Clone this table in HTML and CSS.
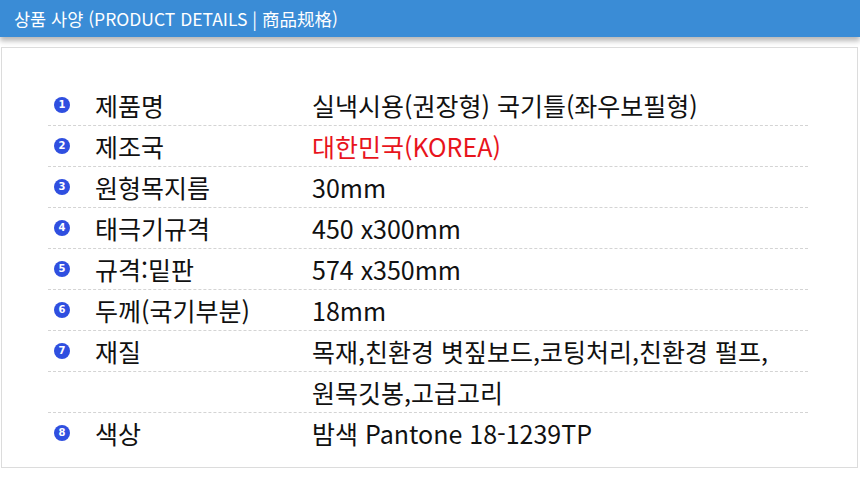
FILE: index.html
```html
<!DOCTYPE html>
<html lang="ko">
<head>
<meta charset="utf-8">
<link rel="stylesheet" href="styles.css">
</head>
<body>
<div class="header">상품 사양 (PRODUCT DETAILS | 商品规格)</div>
<div class="panel">
  <div class="rows">
    <div class="row"><span class="badge">1</span><span class="label">제품명</span><span class="value">실낵시용(권장형) 국기틀(좌우보필형)</span></div>
    <div class="row"><span class="badge">2</span><span class="label">제조국</span><span class="value red">대한민국(KOREA)</span></div>
    <div class="row"><span class="badge">3</span><span class="label">원형목지름</span><span class="value">30mm</span></div>
    <div class="row"><span class="badge">4</span><span class="label">태극기규격</span><span class="value">450 x300mm</span></div>
    <div class="row"><span class="badge">5</span><span class="label">규격:밑판</span><span class="value">574 x350mm</span></div>
    <div class="row"><span class="badge">6</span><span class="label">두께(국기부분)</span><span class="value">18mm</span></div>
    <div class="row"><span class="badge">7</span><span class="label">재질</span><span class="value">목재,친환경 볏짚보드,코팅처리,친환경 펄프,</span></div>
    <div class="row"><span class="nobadge"></span><span class="label"></span><span class="value">원목깃봉,고급고리</span></div>
    <div class="row last"><span class="badge">8</span><span class="label">색상</span><span class="value">밤색 Pantone 18-1239TP</span></div>
  </div>
</div>
</body>
</html>
```
FILE: styles.css
```css
html, body {
  margin: 0;
  padding: 0;
  background: #ffffff;
}
body {
  width: 860px;
  height: 480px;
  overflow: hidden;
  font-family: "Noto Sans CJK KR", "Noto Sans", sans-serif;
}
.header {
  height: 37px;
  background: #3a8cd6;
  color: #ffffff;
  font-size: 17.5px;
  line-height: 37px;
  padding-left: 14px;
  box-shadow: 0 4px 5px rgba(0, 0, 0, 0.28);
  position: relative;
}
.panel {
  margin: 10px 2px 0 1px;
  height: 421px;
  border: 1px solid #dcdcdc;
  box-sizing: border-box;
  padding: 37px 49px 0 46px;
}
.row {
  display: flex;
  align-items: center;
  height: 40px;
  border-bottom: 1px dashed #d4d4d4;
  color: #111111;
}
.row.last {
  border-bottom: none;
}
.badge, .nobadge {
  flex: none;
  width: 16px;
  height: 16px;
  margin-left: 6px;
  border-radius: 50%;
  background: #2f4fe0;
  color: #ffffff;
  font-family: "DejaVu Sans", sans-serif;
  font-weight: bold;
  font-size: 10px;
  line-height: 16px;
  text-align: center;
}
.nobadge {
  background: transparent;
}
.label {
  flex: none;
  width: 217px;
  margin-left: 25px;
  font-size: 25px;
  line-height: 30px;
}
.value {
  font-size: 25px;
  line-height: 30px;
  white-space: nowrap;
}
.red {
  color: #e8141c;
}
```
